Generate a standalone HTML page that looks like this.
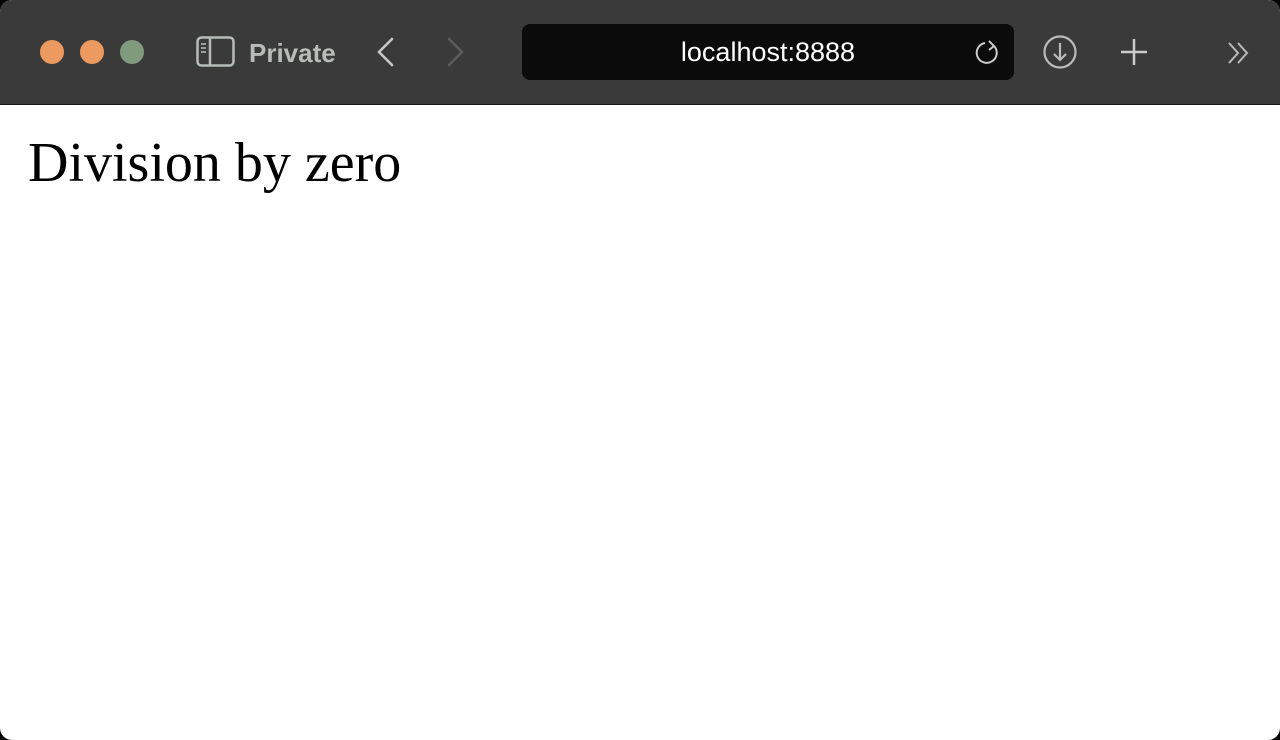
<!DOCTYPE html>
<html><head><style>
html,body{margin:0;padding:0;background:#000;width:1280px;height:740px;overflow:hidden}
.win{position:absolute;left:0;top:0;width:1280px;height:740px;border-radius:12px;overflow:hidden;background:#fff}
.bar{position:absolute;left:0;top:0;width:1280px;height:104px;background:#3a3a3a;border-bottom:1px solid #1a1a1a}
.dot{position:absolute;top:40px;width:24px;height:24px;border-radius:50%}
.t{position:absolute;font-family:"Liberation Sans",sans-serif}
.url{position:absolute;left:522px;top:24px;width:492px;height:56px;background:#0b0b0b;border-radius:8px}
h1{position:absolute;left:28px;top:131px;margin:0;font:normal 56px "Liberation Serif",serif;color:#000}
</style></head><body><div class="win">
<div class="bar">
<div class="dot" style="left:40px;background:#ec9a60"></div>
<div class="dot" style="left:80px;background:#ec9a60"></div>
<div class="dot" style="left:120px;background:#7f9a7d"></div>
<svg style="position:absolute;left:196px;top:36px" width="40" height="32" viewBox="0 0 40 32" fill="none" stroke="#b8bcb8" stroke-width="2.5"><rect x="1.5" y="1.5" width="36" height="28" rx="4"/><line x1="14" y1="2" x2="14" y2="30"/><line x1="5" y1="8" x2="10" y2="8" stroke-width="1.5"/><line x1="5" y1="12" x2="10" y2="12" stroke-width="1.5"/><line x1="5" y1="16" x2="10" y2="16" stroke-width="1.5"/></svg>
<div class="t" style="left:249px;top:38px;font-size:26px;font-weight:bold;color:#b8bcb8">Private</div>
<svg style="position:absolute;left:374px;top:36px" width="24" height="32" fill="none" stroke="#c8c8c8" stroke-width="2.5" stroke-linecap="round"><polyline points="18,3 5,16 18,29"/></svg>
<svg style="position:absolute;left:444px;top:36px" width="24" height="32" fill="none" stroke="#5c5c5c" stroke-width="2.5" stroke-linecap="round"><polyline points="5,3 18,16 5,29"/></svg>
<div class="url"></div>
<div class="t" style="left:522px;width:492px;text-align:center;top:37px;font-size:27px;color:#fff">localhost:8888</div>
<svg style="position:absolute;left:975px;top:38px" width="28" height="28" fill="none" stroke="#ccc" stroke-width="2"><path d="M19 8 A10 10 0 1 1 10 5"/><polyline points="14,3 19,8 14,12"/></svg>
<svg style="position:absolute;left:1042px;top:34px" width="36" height="36" fill="none" stroke="#bbb" stroke-width="2.2"><circle cx="18" cy="18" r="15.5"/><line x1="18" y1="9" x2="18" y2="26"/><polyline points="12,20 18,26 24,20"/></svg>
<svg style="position:absolute;left:1118px;top:36px" width="32" height="32" stroke="#ccc" stroke-width="2.5"><line x1="16" y1="3" x2="16" y2="29"/><line x1="3" y1="16" x2="29" y2="16"/></svg>
<svg style="position:absolute;left:1226px;top:40px" width="30" height="26" fill="none" stroke="#bbb" stroke-width="2"><polyline points="3,3 12,13 3,23"/><polyline points="12,3 21,13 12,23"/></svg>
</div>
<h1>Division by zero</h1>
</div></body></html>
